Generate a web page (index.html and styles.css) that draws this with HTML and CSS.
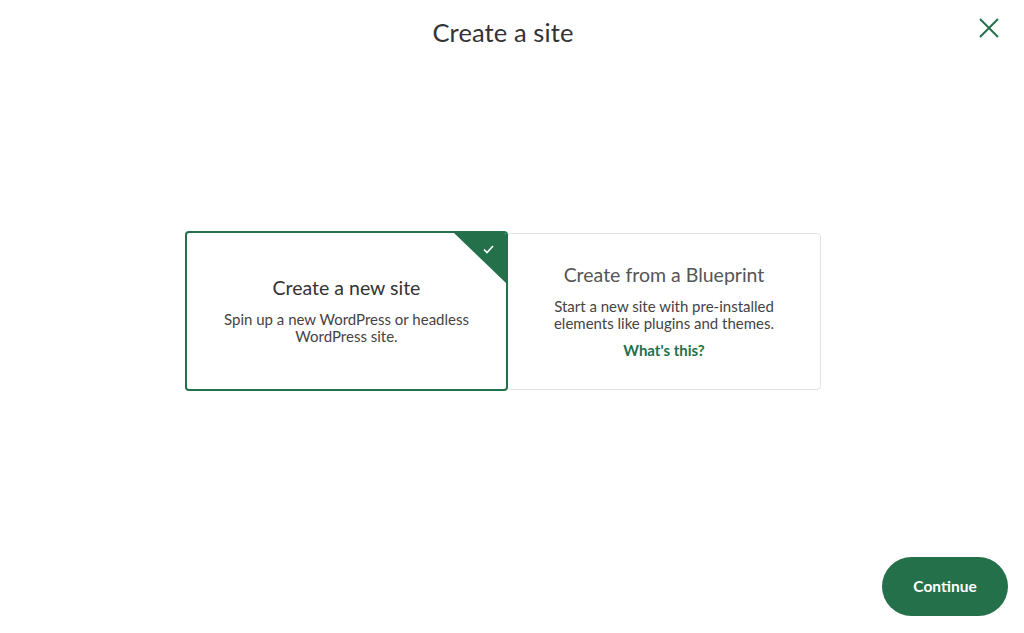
FILE: index.html
```html
<!DOCTYPE html>
<html lang="en">
<head>
<meta charset="utf-8">
<title>Create a site</title>
<link rel="stylesheet" href="styles.css">
</head>
<body>
<div class="page">
  <header class="header">
    <h1 class="title">Create a site</h1>
    <button class="close" aria-label="Close">
      <svg width="20" height="20" viewBox="0 0 20 20"><path d="M1 1L19 19M19 1L1 19" stroke="#24704a" stroke-width="2" fill="none"/></svg>
    </button>
  </header>
  <main class="main">
    <div class="cards">
      <div class="card card-selected">
        <span class="corner"></span>
        <svg class="check" width="11" height="9" viewBox="0 0 11 9"><path d="M1 4.5L4 7.5L10 1" stroke="#fff" stroke-width="1.6" fill="none"/></svg>
        <h2 class="card-title">Create a new site</h2>
        <p class="card-desc">Spin up a new WordPress or headless WordPress site.</p>
      </div>
      <div class="card">
        <h2 class="card-title">Create from a Blueprint</h2>
        <p class="card-desc">Start a new site with pre-installed elements like plugins and themes.</p>
        <a class="link" href="#">What's this?</a>
      </div>
    </div>
  </main>
  <footer class="footer">
    <button class="continue">Continue</button>
  </footer>
</div>
</body>
</html>
```
FILE: styles.css
```css
* { box-sizing: border-box; }
html, body { margin: 0; padding: 0; background: #fff; }
body {
  font-family: Lato, "Open Sans", "Liberation Sans", sans-serif;
  color: #333;
}
.page {
  width: 1024px;
  height: 633px;
  display: flex;
  flex-direction: column;
  padding-right: 18px;
}
.header {
  height: 68px;
  display: flex;
  justify-content: center;
  align-items: center;
  position: relative;
}
.title {
  margin: 0;
  margin-top: -4px;
  font-size: 25.5px;
  font-weight: 400;
  color: #333;
  letter-spacing: 0.1px;
}
.close {
  position: absolute;
  right: 7px;
  top: 18px;
  width: 20px;
  height: 20px;
  padding: 0;
  border: 0;
  background: none;
  display: block;
}
.close svg { display: block; }
.main {
  flex: 1;
  display: flex;
  justify-content: center;
  padding-top: 163px;
}
.cards {
  display: flex;
  align-items: center;
  height: 160px;
}
.card {
  width: 314px;
  height: 157px;
  border: 1px solid #e3e3e3;
  border-radius: 4px;
  display: flex;
  flex-direction: column;
  align-items: center;
  padding-top: 29px;
  text-align: center;
  position: relative;
}
.card-selected {
  width: 323px;
  height: 160px;
  border: 2px solid #24704a;
  padding-top: 43px;
  overflow: hidden;
  margin-right: -1px;
  z-index: 1;
}
.corner {
  position: absolute;
  top: 0;
  right: 0;
  width: 0;
  height: 0;
  border-top: 50px solid #24704a;
  border-left: 52px solid transparent;
}
.check {
  position: absolute;
  top: 12px;
  right: 12px;
}
.card-title {
  margin: 0;
  font-size: 19.5px;
  font-weight: 400;
  color: #333;
  line-height: 24px;
}
.card:not(.card-selected) .card-title { color: #555; }
.card-desc {
  margin: 11px 0 0;
  font-size: 15px;
  line-height: 17px;
  color: #444;
  max-width: 270px;
}
.link {
  margin-top: 9px;
  font-size: 15px;
  font-weight: 700;
  color: #24704a;
  text-decoration: none;
}
.footer {
  display: flex;
  justify-content: flex-end;
  padding: 0 0 17px;
  margin-right: -2px;
}
.continue {
  width: 126px;
  height: 59px;
  border: 0;
  border-radius: 30px;
  background: #24704a;
  color: #fff;
  font-family: inherit;
  font-size: 15.5px;
  font-weight: 700;
  padding-bottom: 2px;
}
```
